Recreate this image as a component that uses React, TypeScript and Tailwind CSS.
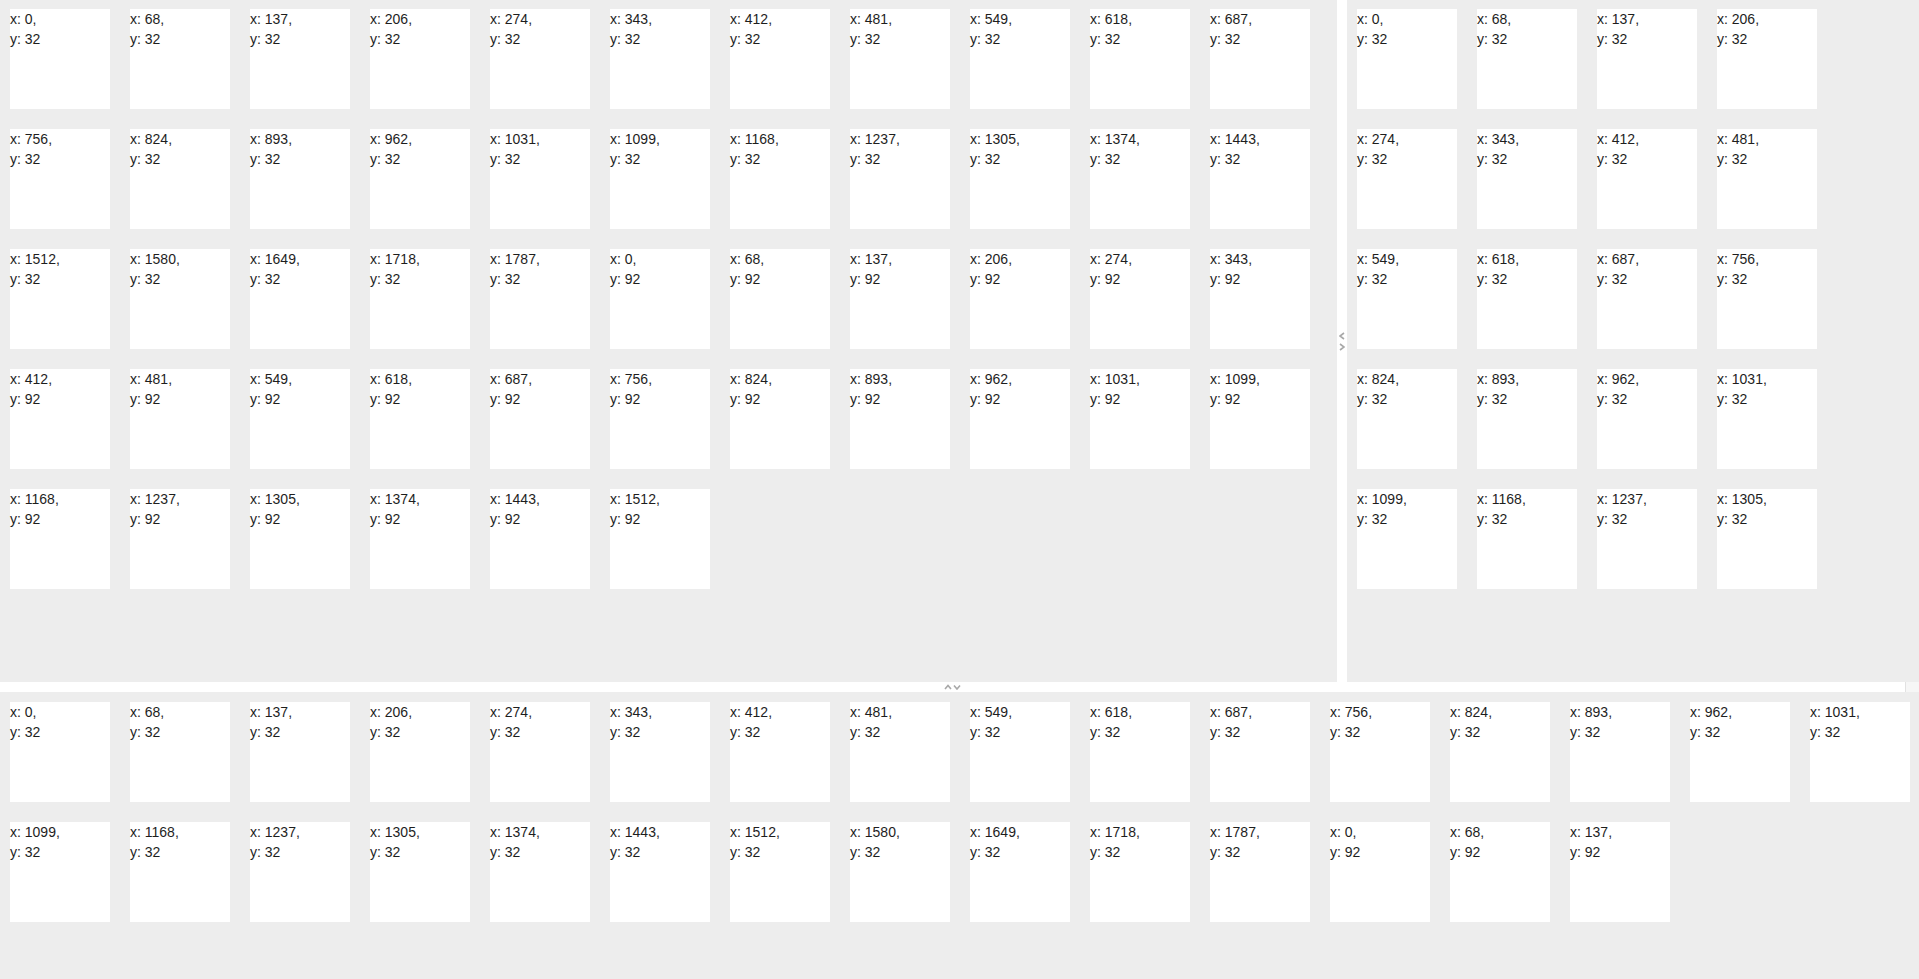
import React from "react";

const XS = [0, 68, 137, 206, 274, 343, 412, 481, 549, 618, 687, 756, 824, 893, 962, 1031, 1099, 1168, 1237, 1305, 1374, 1443, 1512, 1580, 1649, 1718, 1787];

type Pos = { x: number; y: number };

const leftItems: Pos[] = [
  ...XS.map((x) => ({ x, y: 32 })),
  ...XS.slice(0, 23).map((x) => ({ x, y: 92 })),
];
const rightItems: Pos[] = XS.slice(0, 20).map((x) => ({ x, y: 32 }));
const bottomItems: Pos[] = [
  ...XS.map((x) => ({ x, y: 32 })),
  ...XS.slice(0, 3).map((x) => ({ x, y: 92 })),
];

function Box({ p }: { p: Pos }) {
  return (
    <div className="m-[10px] h-[100px] w-[100px] bg-white text-[14px] leading-5 text-[#1e1e1e]">
      <div>x: {p.x},</div>
      <div>y: {p.y}</div>
    </div>
  );
}

function Chevron({ dir }: { dir: "left" | "right" | "up" | "down" }) {
  const d =
    dir === "left"
      ? "M5 1 L1 4 L5 7"
      : dir === "right"
      ? "M1 1 L5 4 L1 7"
      : dir === "up"
      ? "M1 5 L4 1.5 L7 5"
      : "M1 1.5 L4 5 L7 1.5";
  const w = dir === "left" || dir === "right" ? 6 : 8;
  const h = dir === "left" || dir === "right" ? 8 : 6;
  return (
    <svg width={w} height={h} viewBox={`0 0 ${w} ${h}`} className="block">
      <path d={d} fill="none" stroke="#a8a8a8" strokeWidth="1.6" />
    </svg>
  );
}

export default function App() {
  return (
    <div
      className="flex h-[979px] w-[1919px] flex-col overflow-hidden bg-[#ededed]"
      style={{ fontFamily: '"Liberation Sans", Arial, Helvetica, sans-serif' }}
    >
      <div className="flex h-[682px] shrink-0">
        <div className="w-[1337px] shrink-0 overflow-hidden">
          <div className="-mt-px flex flex-wrap content-start">
            {leftItems.map((p, i) => (
              <Box key={i} p={p} />
            ))}
          </div>
        </div>
        <div className="flex w-[10px] shrink-0 flex-col items-center justify-center gap-[3px] bg-white">
          <Chevron dir="left" />
          <Chevron dir="right" />
        </div>
        <div className="flex-1 overflow-hidden">
          <div className="-mt-px flex flex-wrap content-start">
            {rightItems.map((p, i) => (
              <Box key={i} p={p} />
            ))}
          </div>
        </div>
      </div>
      <div className="flex h-[10px] shrink-0">
        <div className="flex w-[1905px] shrink-0 items-center justify-center gap-[1px] bg-white">
          <Chevron dir="up" />
          <Chevron dir="down" />
        </div>
        <div className="w-px shrink-0 bg-[#e2e2e2]" />
        <div className="flex-1 bg-[#f6f6f6]" />
      </div>
      <div className="flex-1 overflow-hidden">
        <div className="flex w-[1930px] flex-wrap content-start">
          {bottomItems.map((p, i) => (
            <Box key={i} p={p} />
          ))}
        </div>
      </div>
    </div>
  );
}
